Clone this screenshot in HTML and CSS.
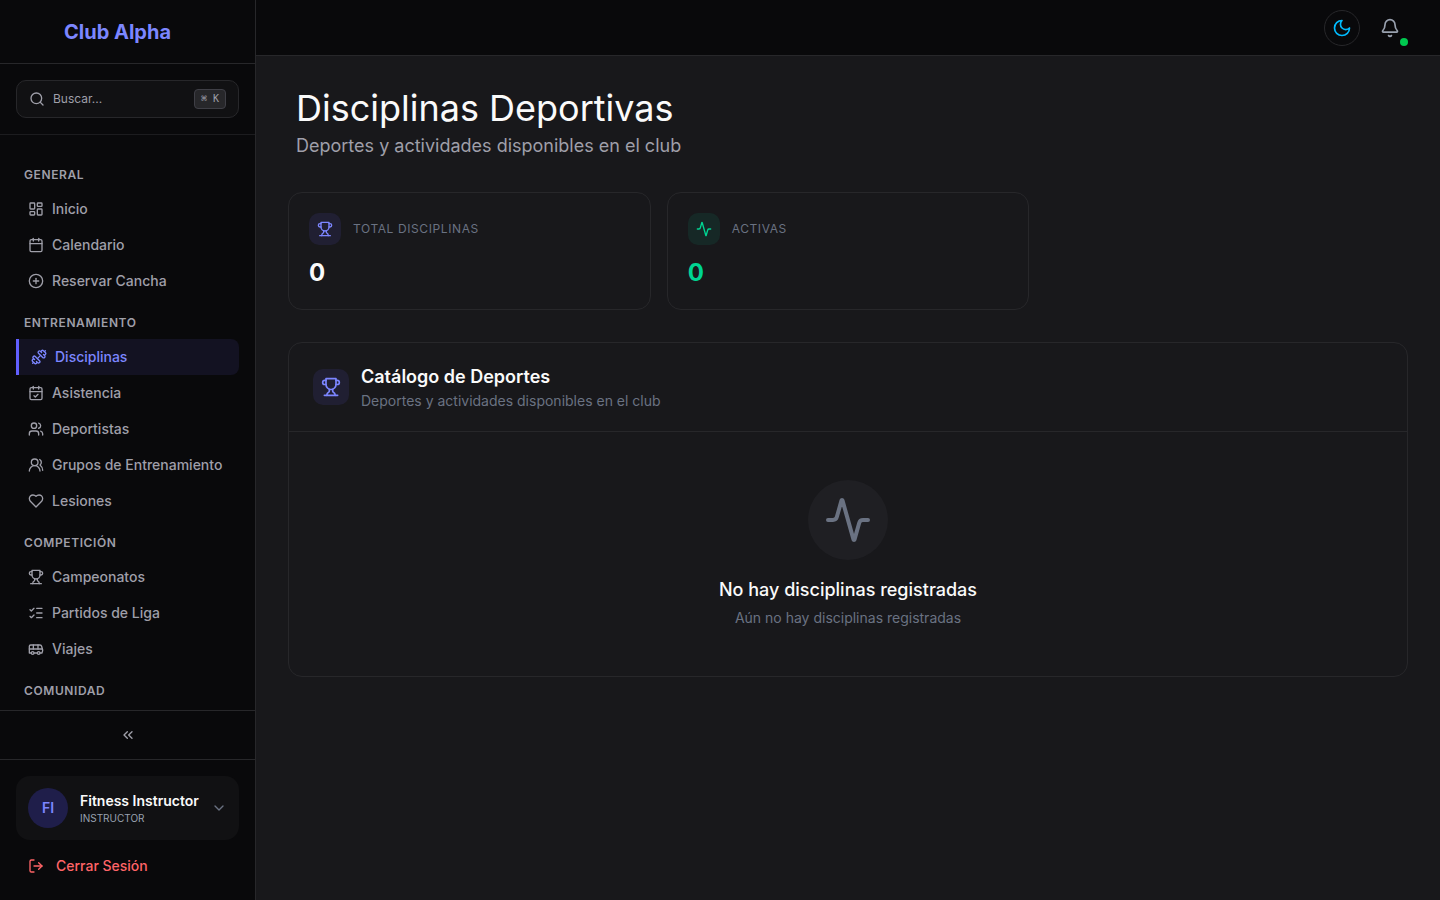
FILE: index.html
```html
<!DOCTYPE html>
<html lang="es">
<head>
<meta charset="utf-8">
<meta name="viewport" content="width=device-width, initial-scale=1">
<title>Disciplinas Deportivas - Club Alpha</title>
<link rel="stylesheet" href="styles.css">
</head>
<body>
<svg class="sprite" aria-hidden="true">
  <symbol id="trophy" viewBox="0 0 24 24"><path d="M6 9H4.5a2.5 2.5 0 0 1 0-5H6"/><path d="M18 9h1.5a2.5 2.5 0 0 0 0-5H18"/><path d="M4 22h16"/><path d="M10 14.66V17c0 .55-.47.98-.97 1.21C7.85 18.75 7 20.24 7 22"/><path d="M14 14.66V17c0 .55.47.98.97 1.21C16.15 18.75 17 20.24 17 22"/><path d="M18 2H6v7a6 6 0 0 0 12 0V2Z"/></symbol>
  <symbol id="activity" viewBox="0 0 24 24"><path d="M22 12h-2.48a2 2 0 0 0-1.93 1.46l-2.35 8.36a.25.25 0 0 1-.48 0L9.24 2.18a.25.25 0 0 0-.48 0l-2.35 8.36A2 2 0 0 1 4.49 12H2"/></symbol>
</svg>
<div class="app">
  <aside class="sidebar">
    <div class="brand"><a class="brand-name" href="#">Club Alpha</a></div>
    <div class="search-wrap">
      <button class="search" type="button">
        <svg class="icon" viewBox="0 0 24 24"><circle cx="11" cy="11" r="8"/><path d="m21 21-4.3-4.3"/></svg>
        <span class="search-text">Buscar...</span>
        <kbd class="keys">⌘ K</kbd>
      </button>
    </div>
    <nav class="nav">
      <h2 class="nav-title">General</h2>
      <a class="nav-link" href="#"><svg class="icon" viewBox="0 0 24 24"><rect width="7" height="9" x="3" y="3" rx="1"/><rect width="7" height="5" x="14" y="3" rx="1"/><rect width="7" height="9" x="14" y="12" rx="1"/><rect width="7" height="5" x="3" y="16" rx="1"/></svg>Inicio</a>
      <a class="nav-link" href="#"><svg class="icon" viewBox="0 0 24 24"><path d="M8 2v4"/><path d="M16 2v4"/><rect width="18" height="18" x="3" y="4" rx="2"/><path d="M3 10h18"/></svg>Calendario</a>
      <a class="nav-link" href="#"><svg class="icon" viewBox="0 0 24 24"><circle cx="12" cy="12" r="10"/><path d="M8 12h8"/><path d="M12 8v8"/></svg>Reservar Cancha</a>
      <h2 class="nav-title">Entrenamiento</h2>
      <a class="nav-link active" href="#" aria-current="page"><svg class="icon" viewBox="0 0 24 24"><path d="M17.596 12.768a2 2 0 1 0 2.829-2.829l-1.768-1.767a2 2 0 0 0 2.828-2.829l-2.828-2.828a2 2 0 0 0-2.829 2.828l-1.767-1.768a2 2 0 1 0-2.829 2.829z"/><path d="m2.5 21.5 1.4-1.4"/><path d="m20.1 3.9 1.4-1.4"/><path d="M5.343 21.485a2 2 0 1 0 2.829-2.828l1.767 1.768a2 2 0 1 0 2.829-2.829l-6.364-6.364a2 2 0 1 0-2.829 2.829l1.768 1.767a2 2 0 0 0-2.828 2.829z"/><path d="m9.6 14.4 4.8-4.8"/></svg>Disciplinas</a>
      <a class="nav-link" href="#"><svg class="icon" viewBox="0 0 24 24"><path d="M8 2v4"/><path d="M16 2v4"/><rect width="18" height="18" x="3" y="4" rx="2"/><path d="M3 10h18"/><path d="m9 16 2 2 4-4"/></svg>Asistencia</a>
      <a class="nav-link" href="#"><svg class="icon" viewBox="0 0 24 24"><path d="M16 21v-2a4 4 0 0 0-4-4H6a4 4 0 0 0-4 4v2"/><circle cx="9" cy="7" r="4"/><path d="M22 21v-2a4 4 0 0 0-3-3.87"/><path d="M16 3.13a4 4 0 0 1 0 7.75"/></svg>Deportistas</a>
      <a class="nav-link" href="#"><svg class="icon" viewBox="0 0 24 24"><path d="M18 21a8 8 0 0 0-16 0"/><circle cx="10" cy="8" r="5"/><path d="M22 20c0-3.37-2-6.5-4-8a5 5 0 0 0-.45-8.3"/></svg>Grupos de Entrenamiento</a>
      <a class="nav-link" href="#"><svg class="icon" viewBox="0 0 24 24"><path d="M19 14c1.49-1.46 3-3.21 3-5.5A5.5 5.5 0 0 0 16.5 3c-1.76 0-3 .5-4.5 2-1.5-1.5-2.74-2-4.5-2A5.5 5.5 0 0 0 2 8.5c0 2.3 1.5 4.05 3 5.5l7 7Z"/></svg>Lesiones</a>
      <h2 class="nav-title">Competición</h2>
      <a class="nav-link" href="#"><svg class="icon"><use href="#trophy"/></svg>Campeonatos</a>
      <a class="nav-link" href="#"><svg class="icon" viewBox="0 0 24 24"><path d="m3 17 2 2 4-4"/><path d="m3 7 2 2 4-4"/><path d="M13 5h8"/><path d="M13 12h8"/><path d="M13 19h8"/></svg>Partidos de Liga</a>
      <a class="nav-link" href="#"><svg class="icon" viewBox="0 0 24 24"><path d="M8 6v6"/><path d="M15 6v6"/><path d="M2 12h19.6"/><path d="M18 18h3s.5-1.7.8-2.8c.1-.4.2-.8.2-1.2 0-.4-.1-.8-.2-1.2l-1.4-5C20.1 6.8 19.1 6 18 6H4a2 2 0 0 0-2 2v10h3"/><circle cx="7" cy="18" r="2"/><path d="M9 18h5"/><circle cx="16" cy="18" r="2"/></svg>Viajes</a>
      <h2 class="nav-title">Comunidad</h2>
    </nav>
    <button class="collapse" type="button" aria-label="Contraer menú"><svg class="icon" viewBox="0 0 24 24"><path d="m11 17-5-5 5-5"/><path d="m18 17-5-5 5-5"/></svg></button>
    <div class="account">
      <button class="user" type="button">
        <span class="avatar">FI</span>
        <span class="user-text"><span class="user-name">Fitness Instructor</span><span class="user-role">INSTRUCTOR</span></span>
        <svg class="icon" viewBox="0 0 24 24"><path d="m6 9 6 6 6-6"/></svg>
      </button>
      <button class="logout" type="button"><svg class="icon" viewBox="0 0 24 24"><path d="M9 21H5a2 2 0 0 1-2-2V5a2 2 0 0 1 2-2h4"/><path d="m16 17 5-5-5-5"/><path d="M21 12H9"/></svg>Cerrar Sesión</button>
    </div>
  </aside>
  <div class="content">
    <header class="topbar">
      <button class="round theme" type="button" aria-label="Cambiar tema"><svg class="icon" viewBox="0 0 24 24"><path d="M12 3a6 6 0 0 0 9 9 9 9 0 1 1-9-9Z"/></svg></button>
      <button class="round bell" type="button" aria-label="Notificaciones"><svg class="icon" viewBox="0 0 24 24"><path d="M10.268 21a2 2 0 0 0 3.464 0"/><path d="M3.262 15.326A1 1 0 0 0 4 17h16a1 1 0 0 0 .74-1.673C19.41 13.956 18 12.499 18 8A6 6 0 0 0 6 8c0 4.499-1.411 5.956-2.738 7.326"/></svg><span class="dot"></span></button>
    </header>
    <main class="main">
      <div class="page-head">
        <h1>Disciplinas Deportivas</h1>
        <p>Deportes y actividades disponibles en el club</p>
      </div>
      <section class="stats">
        <div class="card stat">
          <div class="stat-head"><span class="tile indigo"><svg class="icon"><use href="#trophy"/></svg></span><span class="stat-label">Total Disciplinas</span></div>
          <div class="stat-value">0</div>
        </div>
        <div class="card stat">
          <div class="stat-head"><span class="tile green"><svg class="icon"><use href="#activity"/></svg></span><span class="stat-label">Activas</span></div>
          <div class="stat-value positive">0</div>
        </div>
      </section>
      <section class="card">
        <div class="card-head">
          <span class="tile indigo large"><svg class="icon"><use href="#trophy"/></svg></span>
          <div><h2>Catálogo de Deportes</h2><p>Deportes y actividades disponibles en el club</p></div>
        </div>
        <div class="empty">
          <span class="empty-icon"><svg class="icon"><use href="#activity"/></svg></span>
          <h3>No hay disciplinas registradas</h3>
          <p>Aún no hay disciplinas registradas</p>
        </div>
      </section>
    </main>
  </div>
</div>
</body>
</html>
```
FILE: styles.css
```css
* { box-sizing: border-box; }
body {
  margin: 0;
  background: #18181b;
  color: #fafafa;
  font-family: Inter, "Liberation Sans", sans-serif;
  font-size: 14px;
  line-height: 20px;
}
h1, h2, h3, p { margin: 0; }
button { font: inherit; color: inherit; background: none; border: 0; padding: 0; cursor: pointer; text-align: left; }
a { color: inherit; text-decoration: none; }
.sprite { display: none; }
.icon {
  width: 16px; height: 16px; flex: none;
  fill: none; stroke: currentColor; stroke-width: 2;
  stroke-linecap: round; stroke-linejoin: round;
}
.app { display: flex; height: 100vh; }

.sidebar {
  width: 256px; flex: none;
  display: flex; flex-direction: column;
  background: #09090b;
  border-right: 1px solid #27272a;
}
.brand {
  height: 64px; flex: none;
  display: flex; align-items: center; justify-content: center;
  padding-right: 20px;
  border-bottom: 1px solid #27272a;
}
.brand-name { font-size: 20px; line-height: 28px; font-weight: 700; color: #7c86ff; }
.search-wrap { padding: 16px; border-bottom: 1px solid #1c1c1f; }
.search {
  width: 100%; height: 38px;
  display: flex; align-items: center; gap: 8px;
  padding: 0 12px;
  background: #111113; border: 1px solid #27272a; border-radius: 10px;
  color: #9f9fa9;
}
.search-text { flex: 1; font-size: 12px; line-height: 16px; }
.keys {
  padding: 1px 6px;
  border: 1px solid #3f3f46; border-radius: 4px;
  background: #27272a;
  font-family: "DejaVu Sans Mono", "Liberation Mono", monospace;
  font-size: 10px; line-height: 16px;
}
.nav { flex: 1; min-height: 0; overflow: hidden; padding: 16px 16px 0; }
.nav-title {
  padding: 16px 8px 8px;
  font-size: 12px; line-height: 16px; font-weight: 600;
  color: #9f9fa9; text-transform: uppercase; letter-spacing: 0.05em;
}
.nav-link {
  height: 36px;
  display: flex; align-items: center; gap: 8px;
  padding: 0 12px;
  font-weight: 500; color: #9f9fa9; white-space: nowrap;
}
.nav-link.active {
  border-left: 3px solid #615fff;
  border-radius: 0 8px 8px 0;
  background: #131222; color: #7c86ff;
}
.collapse {
  height: 49px; flex: none;
  display: flex; align-items: center; justify-content: center;
  border-top: 1px solid #27272a; color: #9f9fa9;
}
.account {
  display: flex; flex-direction: column; gap: 8px;
  padding: 16px; border-top: 1px solid #27272a;
}
.user {
  display: flex; align-items: center; gap: 12px;
  padding: 12px; border-radius: 14px; background: #111113;
}
.avatar {
  width: 40px; height: 40px; flex: none;
  display: flex; align-items: center; justify-content: center;
  border-radius: 50%; background: #1f1e4a; color: #7c86ff; font-weight: 600;
}
.user-text { flex: 1; min-width: 0; display: flex; flex-direction: column; white-space: nowrap; }
.user-name { font-weight: 600; }
.user-role { font-size: 10px; line-height: 15px; color: #99a1af; }
.user .icon { color: #6a7282; }
.logout {
  height: 36px;
  display: flex; align-items: center; gap: 12px;
  padding: 0 12px; font-weight: 500; color: #ff6467;
}

.content { flex: 1; min-width: 0; display: flex; flex-direction: column; }
.topbar {
  height: 56px; flex: none;
  display: flex; align-items: center; justify-content: flex-end; gap: 12px;
  padding: 0 32px;
  background: #09090b; border-bottom: 1px solid #27272a;
}
.round {
  position: relative;
  width: 36px; height: 36px;
  display: flex; align-items: center; justify-content: center;
  border-radius: 50%;
}
.round .icon { width: 20px; height: 20px; }
.theme { border: 1px solid #27272a; color: #00bcff; }
.bell { color: #99a1af; }
.dot {
  position: absolute; right: 0; bottom: 0;
  width: 8px; height: 8px; border-radius: 50%; background: #00c950;
}
.main { flex: 1; min-height: 0; overflow: auto; padding: 32px; display: flex; flex-direction: column; gap: 32px; }
.page-head { padding: 0 8px; }
.page-head h1 { font-size: 36px; line-height: 40px; font-weight: 400; }
.page-head p { margin-top: 4px; font-size: 18px; line-height: 28px; color: #9f9fa9; }
.stats { display: grid; grid-template-columns: repeat(3, 1fr); gap: 16px; }
.card { border: 1px solid #27272a; border-radius: 14px; }
.stat { display: flex; flex-direction: column; gap: 12px; padding: 20px; }
.stat-head { display: flex; align-items: center; gap: 12px; }
.tile {
  width: 32px; height: 32px; flex: none;
  display: flex; align-items: center; justify-content: center;
  border-radius: 10px;
}
.tile.large { width: 36px; height: 36px; }
.tile.large .icon { width: 20px; height: 20px; }
.indigo { background: #201f32; color: #7c86ff; }
.green { background: #162826; color: #00d492; }
.stat-label { font-size: 12px; line-height: 16px; color: #6a7282; text-transform: uppercase; letter-spacing: 0.05em; }
.stat-value { font-size: 24px; line-height: 32px; font-weight: 700; }
.positive { color: #00d492; }
.card-head {
  display: flex; align-items: center; gap: 12px;
  padding: 20px 24px; border-bottom: 1px solid #27272a;
}
.card-head h2 { font-size: 18px; line-height: 28px; font-weight: 600; }
.card-head p, .empty p { color: #6a7282; }
.empty { display: flex; flex-direction: column; align-items: center; padding: 48px 24px; text-align: center; }
.empty-icon {
  width: 80px; height: 80px; margin-bottom: 16px;
  display: flex; align-items: center; justify-content: center;
  border-radius: 50%; background: #1f1f23; color: #6a7282;
}
.empty-icon .icon { width: 48px; height: 48px; }
.empty h3 { margin-bottom: 4px; font-size: 18px; line-height: 28px; font-weight: 500; }
```
